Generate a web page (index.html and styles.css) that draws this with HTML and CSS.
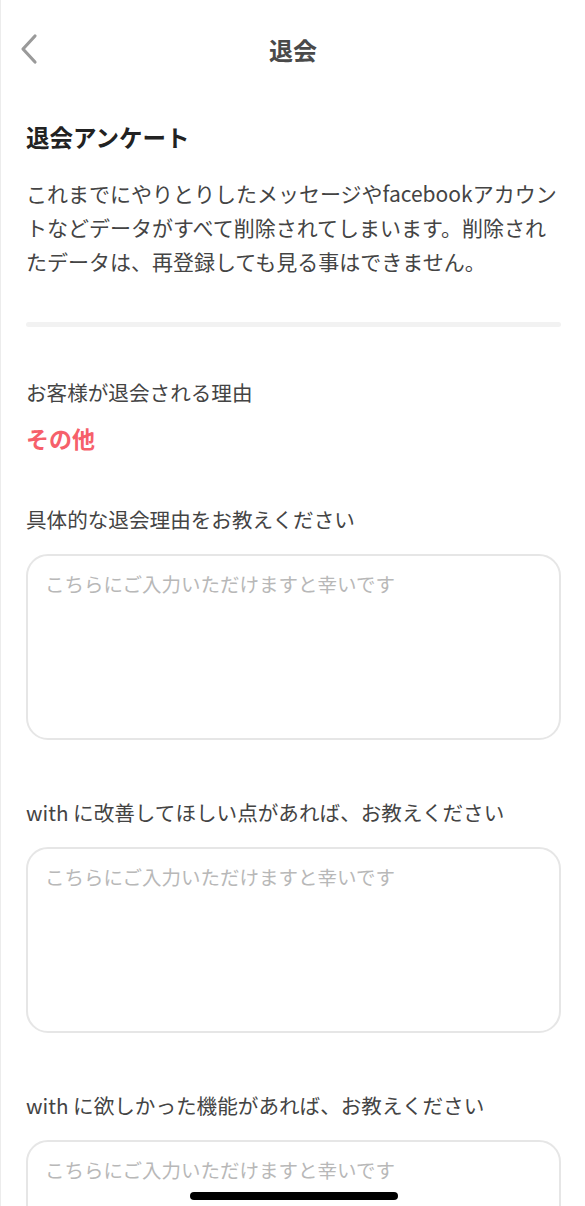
FILE: index.html
```html
<!DOCTYPE html>
<html lang="ja">
<head>
<meta charset="utf-8">
<title>退会</title>
<link rel="stylesheet" href="styles.css">
</head>
<body>
<div class="screen">
  <header class="nav">
    <span class="back" aria-label="戻る">
      <svg width="20" height="32" viewBox="0 0 20 32"><path d="M16 3 L4 16 L16 29" fill="none" stroke="#9a9a9a" stroke-width="3.2" stroke-linecap="round" stroke-linejoin="round"/></svg>
    </span>
    <h1 class="nav-title">退会</h1>
  </header>
  <main class="content">
    <h2 class="heading">退会アンケート</h2>
    <p class="desc">これまでにやりとりしたメッセージやfacebookアカウントなどデータがすべて削除されてしまいます。削除されたデータは、再登録しても見る事はできません。</p>
    <div class="divider"></div>
    <section class="reason">
      <div class="label">お客様が退会される理由</div>
      <div class="reason-value">その他</div>
    </section>
    <section class="field field-first">
      <div class="label">具体的な退会理由をお教えください</div>
      <div class="textarea"><span class="placeholder">こちらにご入力いただけますと幸いです</span></div>
    </section>
    <section class="field">
      <div class="label">with に改善してほしい点があれば、お教えください</div>
      <div class="textarea"><span class="placeholder">こちらにご入力いただけますと幸いです</span></div>
    </section>
    <section class="field">
      <div class="label">with に欲しかった機能があれば、お教えください</div>
      <div class="textarea"><span class="placeholder">こちらにご入力いただけますと幸いです</span></div>
    </section>
  </main>
  <div class="home-indicator"></div>
</div>
</body>
</html>
```

FILE: styles.css
```css
* { box-sizing: border-box; }
html, body {
  margin: 0;
  padding: 0;
  background: #fff;
}
body {
  font-family: "Noto Sans CJK JP", "Noto Sans", sans-serif;
  color: #444;
  overflow: hidden;
  height: 1206px;
}
.screen {
  position: relative;
  height: 1206px;
  overflow: hidden;
  border-left: 1px solid #ececec;
}
.nav {
  position: relative;
  height: 100px;
  display: flex;
  align-items: center;
  justify-content: center;
}
.back {
  position: absolute;
  left: 18px;
  top: 33px;
  width: 20px;
  height: 32px;
  display: block;
}
.back svg { display: block; }
.nav-title {
  margin: 0;
  font-size: 24px;
  font-weight: 700;
  color: #4a4a4a;
  line-height: 100px;
}
.content {
  padding: 0 24px 0 25px;
}
.heading {
  margin: 20px 0 0;
  font-size: 23.5px;
  font-weight: 700;
  color: #222;
  line-height: 34px;
}
.desc {
  margin: 22px 0 0;
  font-size: 21px;
  line-height: 34px;
  color: #444;
}
.divider {
  margin-top: 44px;
  height: 5px;
  border-radius: 3px;
  background: #f2f2f2;
}
.reason { margin-top: 48px; }
.label {
  font-size: 20.6px;
  line-height: 34px;
  color: #444;
  white-space: nowrap;
}
.reason-value {
  margin-top: 12px;
  font-size: 23px;
  font-weight: 700;
  line-height: 34px;
  color: #f6606a;
}
.field { margin-top: 55px; }
.field-first { margin-top: 47px; }
.textarea {
  margin-top: 18px;
  height: 186px;
  border: 2px solid #e6e6e6;
  border-radius: 22px;
  padding: 14px 17px;
}
.placeholder {
  font-size: 19.5px;
  line-height: 28px;
  color: #b8b8b8;
}
.home-indicator {
  position: absolute;
  left: 189px;
  top: 1192px;
  width: 208px;
  height: 8px;
  border-radius: 4px;
  background: #000;
}
```
